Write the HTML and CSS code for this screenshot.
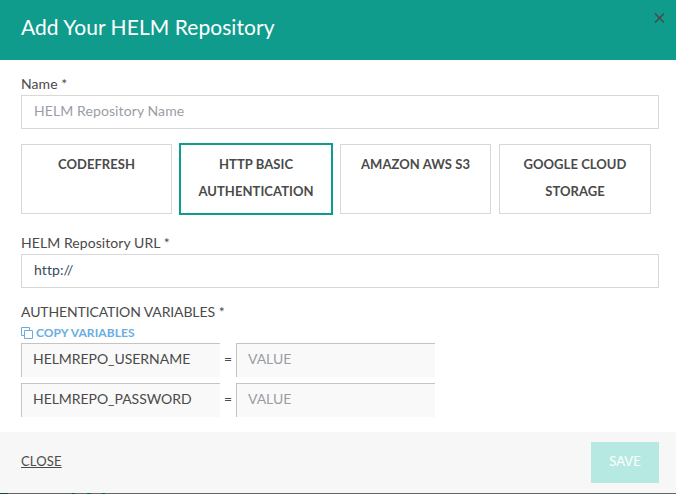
FILE: index.html
```html
<!DOCTYPE html>
<html lang="en">
<head>
<meta charset="utf-8">
<title>Add Your HELM Repository</title>
<link rel="stylesheet" href="styles.css">
</head>
<body>
<div class="modal">
  <header class="header">
    <h1 class="title">Add Your HELM Repository</h1>
    <button class="dismiss" aria-label="Close"><svg width="11" height="11" viewBox="0 0 11 11"><path d="M1 1.500 10 10.500M10 1.500 1 10.500"/></svg></button>
  </header>
  <main class="content">
    <label class="label" for="name">Name *</label>
    <input class="input" id="name" placeholder="HELM Repository Name">
    <div class="types">
      <div class="type">CODEFRESH</div>
      <div class="type selected">HTTP BASIC AUTHENTICATION</div>
      <div class="type">AMAZON AWS S3</div>
      <div class="type">GOOGLE CLOUD STORAGE</div>
    </div>
    <label class="label" for="url">HELM Repository URL *</label>
    <input class="input" id="url" value="http://">
    <div class="label auth">AUTHENTICATION VARIABLES<span class="required"> *</span></div>
    <a class="copy"><svg width="12" height="12" viewBox="0 0 12 12"><path d="M3.500 3.500h8v8h-8zM3.500 8.500h-3v-8h8v3"/></svg><span>COPY VARIABLES</span></a>
    <div class="variable">
      <input class="cell" value="HELMREPO_USERNAME" readonly>
      <span class="equals">=</span>
      <input class="cell" placeholder="VALUE">
    </div>
    <div class="variable">
      <input class="cell" value="HELMREPO_PASSWORD" readonly>
      <span class="equals">=</span>
      <input class="cell" placeholder="VALUE">
    </div>
  </main>
  <footer class="footer">
    <a class="close">CLOSE</a>
    <button class="save" disabled>SAVE</button>
  </footer>
</div>
<div class="backdrop"></div>
</body>
</html>
```
FILE: styles.css
```css
* {
  box-sizing: border-box;
}

body {
  margin: 0;
  background: #fff;
  color: #4a4a4a;
  font: 14px/20px Lato, "Liberation Sans", sans-serif;
  overflow: hidden;
}

input,
button {
  font: inherit;
  margin: 0;
  border-radius: 0;
  outline: 0;
}

.modal {
  display: flex;
  flex-direction: column;
  height: 493px;
}

.header {
  display: flex;
  justify-content: space-between;
  height: 60px;
  padding: 12px 11px 0 21px;
  background: #109c8c;
}

.title {
  margin: -1px 0 0;
  color: #fff;
  font-size: 21px;
  font-weight: 400;
  letter-spacing: 0.06px;
  line-height: 31px;
}

.dismiss {
  display: flex;
  width: 11px;
  height: 12px;
  padding: 0;
  border: 0;
  background: none;
}

.dismiss svg {
  fill: none;
  stroke: #4a4a4a;
  stroke-width: 1.6;
}

.content {
  display: flex;
  flex-direction: column;
  height: 372px;
  padding: 14px 17px 0 21px;
}

.label {
  height: 21px;
  letter-spacing: 0.07px;
}

.input {
  width: 638px;
  height: 34px;
  padding: 0 12px 3px;
  border: 1px solid #d8d8d8;
  background: #fff;
  color: #34495e;
  letter-spacing: 0.1px;
}

::placeholder {
  color: #999da5;
  opacity: 1;
}

.types {
  display: grid;
  grid-template-columns: 151px 152px 151px 152px;
  gap: 8px;
  height: 70px;
  margin: 15px 0 19px;
}

.type {
  padding: 6px 15px 0;
  border: 1px solid #d8d8d8;
  font-size: 13px;
  font-weight: 700;
  letter-spacing: 0.06px;
  line-height: 27px;
  text-align: center;
}

.selected {
  border-color: #109c8c;
  box-shadow: 0 0 0 1px #109c8c;
}

.auth {
  margin-top: 14px;
  letter-spacing: -0.12px;
}

.required {
  letter-spacing: 0.3px;
}

.copy {
  display: flex;
  align-items: center;
  gap: 3px;
  height: 20px;
  color: #6aaee0;
  font-size: 12px;
  font-weight: 700;
  letter-spacing: 0.07px;
}

.copy svg {
  fill: none;
  stroke: #6aaee0;
}

.variable {
  display: flex;
  height: 34px;
  margin-bottom: 6px;
}

.cell {
  width: 199px;
  padding: 0 11px 3px;
  border: solid #c4c4c4;
  border-width: 1px 0 0 1px;
  background: #f9f9f9;
  color: #4a4a4a;
  letter-spacing: -0.04px;
}

.equals {
  width: 16px;
  line-height: 32px;
  text-align: center;
}

.footer {
  display: flex;
  justify-content: space-between;
  align-items: center;
  height: 61px;
  padding: 0 17px 0 21px;
  background: #f7f7f7;
}

.close {
  padding-bottom: 4px;
  font-size: 13px;
  letter-spacing: 0.15px;
  text-decoration: underline;
}

.save {
  width: 68px;
  height: 41px;
  padding: 0 0 3px;
  border: 0;
  background: #b7e9e3;
  color: #fff;
  font-size: 13px;
}

.backdrop {
  height: 1px;
  background: linear-gradient(90deg, #00514c 8px, #666 8px 72px, #005568 72px 75px, #666 75px 87px, #005568 87px 91px, #666 91px 102px, #005568 102px 105px, #666 105px);
}
```
